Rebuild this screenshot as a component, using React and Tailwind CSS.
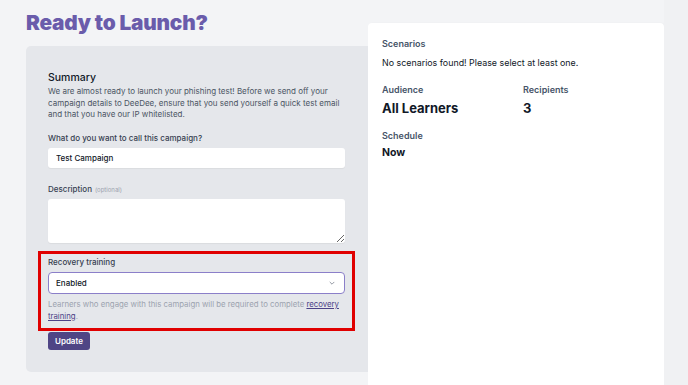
import React from "react";

function Field({ label, optional, children }) {
  return (
    <div className="flex flex-col">
      <label className="text-[8px] font-medium text-[#374151] leading-[12px]">
        {label}
        {optional && (
          <span className="ml-[3px] text-[6px] font-normal text-[#9ca3af]">
            {optional}
          </span>
        )}
      </label>
      {children}
    </div>
  );
}

function Stat({ label, value, big }) {
  return (
    <div>
      <p className="text-[9px] font-semibold text-[#475569] leading-[12px]">{label}</p>
      <p
        className={
          big
            ? "mt-[3px] text-[13px] font-bold text-[#111827] leading-[18px]"
            : "mt-[3px] text-[10.5px] font-bold text-[#111827] leading-[15px]"
        }
      >
        {value}
      </p>
    </div>
  );
}

export default function App() {
  return (
    <div
      className="h-[385px] w-[688px] overflow-hidden bg-[#f3f4f6] text-[#111827]"
      style={{ fontFamily: "Inter, 'Liberation Sans', sans-serif" }}
    >
      <div className="flex pl-[26px]">
        {/* Left column */}
        <div className="w-[342px] shrink-0">
          <h1 className="pt-[10px] text-[20.8px] font-black leading-[26px] tracking-[-0.2px] text-[#6a5cab]">
            Ready to Launch?
          </h1>

          <div className="mt-[10px] h-[326px] rounded-l-[5px] bg-[#e5e7eb] pl-[22px] pr-[23px] pt-[25px]">
            <h2 className="text-[10.5px] font-medium leading-[13px] text-[#111827]">Summary</h2>
            <p className="mt-[2px] text-[8px] leading-[11.7px] text-[#4b5563]">
              We are almost ready to launch your phishing test! Before we send off your campaign
              details to DeeDee, ensure that you send yourself a quick test email and that you have
              our IP whitelisted.
            </p>

            <div className="mt-[11px] flex flex-col gap-[15px]">
              <Field label="What do you want to call this campaign?">
                <input
                  readOnly
                  value="Test Campaign"
                  className="mt-[4px] h-[20px] w-full rounded-[3px] bg-white px-[8px] text-[8px] font-medium text-[#111827] shadow-[0_1px_1px_rgba(0,0,0,0.05)] outline-none"
                />
              </Field>

              <Field label="Description" optional="(optional)">
                <textarea
                  readOnly
                  className="mt-[3px] block h-[44px] w-full rounded-[3px] bg-white shadow-[0_1px_1px_rgba(0,0,0,0.05)] outline-none"
                />
              </Field>
            </div>

            {/* Highlighted recovery training block */}
            <div className="-mx-[10px] mt-[8px] border-[3px] border-[#e00000] px-[7px] pb-[6px] pt-[2px]">
              <Field label="Recovery training">
                <div className="mt-[4px] flex h-[22px] items-center justify-between rounded-[4px] border border-[#8b7fc9] bg-white pl-[7px] pr-[8px]">
                  <span className="text-[8px] font-medium text-[#111827]">Enabled</span>
                  <svg width="8" height="8" viewBox="0 0 20 20" fill="none">
                    <path d="M5 8l5 5 5-5" stroke="#6b7280" strokeWidth="1.8" strokeLinecap="round" strokeLinejoin="round" />
                  </svg>
                </div>
              </Field>
              <p className="mt-[5px] text-[7.8px] leading-[11.5px] text-[#9ca3af]">
                Learners who engage with this campaign will be required to complete{" "}
                <a className="text-[#4c4287] underline">recovery training</a>.
              </p>
            </div>

            <button className="mt-[1px] block h-[18px] rounded-[3px] bg-[#4f4585] px-[7px] text-[8px] font-semibold text-white">
              Update
            </button>
          </div>
        </div>

        {/* Right card */}
        <div className="mt-[23px] h-[400px] w-[296px] shrink-0 rounded-t-[4px] bg-white px-[14px] pt-[15px] shadow-[1px_0_2px_rgba(0,0,0,0.04)]">
          <p className="text-[9px] font-semibold leading-[12px] text-[#475569]">Scenarios</p>
          <p className="mt-[7px] text-[8.9px] leading-[12px] text-[#111827]">
            No scenarios found! Please select at least one.
          </p>
          <div className="mt-[15px] grid grid-cols-[141px_1fr]">
            <Stat label="Audience" value="All Learners" big />
            <Stat label="Recipients" value="3" big />
          </div>
          <div className="mt-[13px]">
            <Stat label="Schedule" value="Now" />
          </div>
        </div>

        <div className="flex-1 bg-[#f0f1f3]" />
      </div>
    </div>
  );
}
